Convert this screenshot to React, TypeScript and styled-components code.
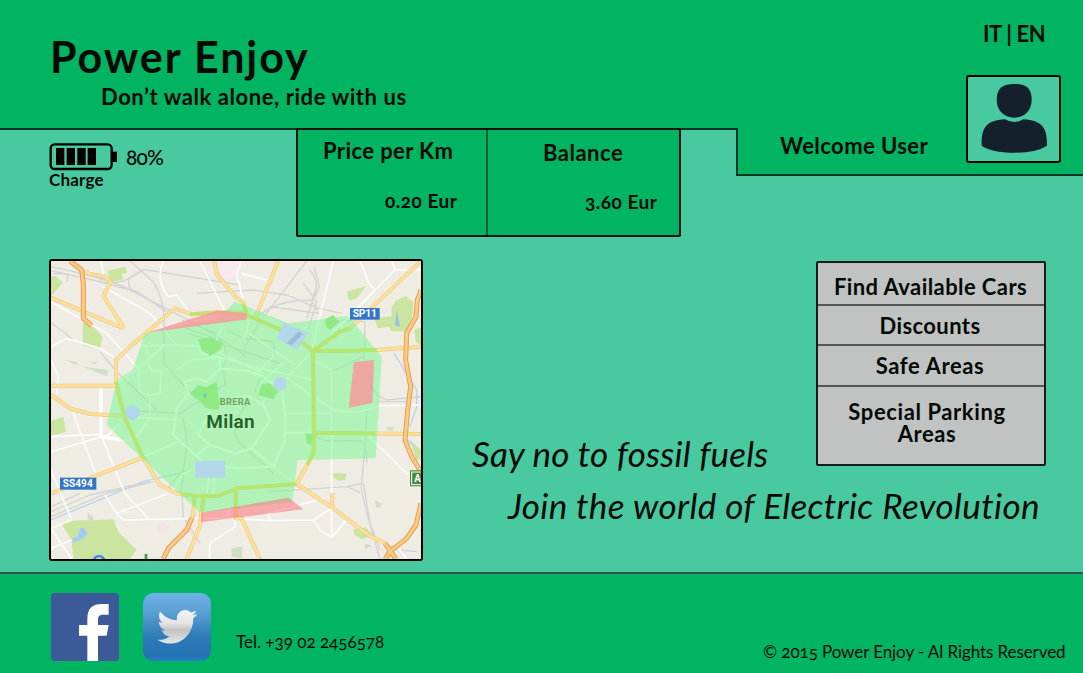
import React from "react";
import styled, { createGlobalStyle } from "styled-components";

const GlobalStyle = createGlobalStyle`
  * { box-sizing: border-box; }
  body { margin: 0; background: #48c9a0; }
`;

const Page = styled.div`
  width: 1083px;
  height: 673px;
  overflow: hidden;
  display: flex;
  flex-direction: column;
  background: #48c9a0;
  color: #030a06;
  font-family: Lato, "Open Sans", sans-serif;
  font-variant-numeric: oldstyle-nums;
  font-variant-ligatures: none;
`;

const Text = styled.span<{ $size: number; $line: number; $weight?: number; $track?: number }>`
  display: block;
  white-space: nowrap;
  font-size: ${(p) => p.$size}px;
  line-height: ${(p) => p.$line}px;
  font-weight: ${(p) => p.$weight ?? 700};
  letter-spacing: ${(p) => p.$track ?? 0}px;
`;

const Title = styled.h1`
  margin: 0;
  font-size: 43px;
  line-height: 46px;
  font-weight: 700;
  letter-spacing: 1.9px;
  white-space: nowrap;
`;

const Top = styled.header`
  display: flex;
  height: 259px;
  flex: none;
`;

const TopLeft = styled.div`
  width: 736px;
`;

const Brand = styled.div`
  height: 130px;
  padding: 34px 0 0 50px;
  background: #00b461;
  border-bottom: 2px solid #06361f;
`;

const Tagline = styled.div`
  padding: 1px 0 0 51px;
`;

const StatusRow = styled.div`
  display: flex;
`;

const Charge = styled.div`
  width: 296px;
  padding: 13px 0 0 49px;
`;

const ChargeLevel = styled.div`
  display: flex;
  align-items: center;
  gap: 9px;
  height: 27px;
`;

const Rates = styled.div`
  display: flex;
  width: 385px;
  height: 109px;
  margin-top: -2px;
  background: #00b461;
  border: 2px solid #02150c;
  border-radius: 2px;
`;

const Rate = styled.section<{ $divided?: boolean; $top: number }>`
  width: ${(p) => (p.$divided ? 190 : 191)}px;
  padding: ${(p) => p.$top}px 22px 0 0;
  border-right: ${(p) => (p.$divided ? "2px solid #045c35" : "0")};
  display: flex;
  flex-direction: column;
  gap: 22px;
`;

const RateName = styled.div<{ $left: number }>`
  padding-left: ${(p) => p.$left}px;
`;

const RateValue = styled.div<{ $left: number }>`
  padding-left: ${(p) => p.$left}px;
`;

const UserPanel = styled.div`
  position: relative;
  width: 347px;
  height: 176px;
  background: #00b461;
  border-bottom: 2px solid #06361f;
  &::before {
    content: "";
    position: absolute;
    left: 0;
    top: 128px;
    width: 2px;
    height: 46px;
    background: #06361f;
  }
`;

const Languages = styled.nav`
  display: flex;
  height: 75px;
  padding: 20px 0 0 247px;
`;

const UserRow = styled.div`
  display: flex;
  padding-left: 44px;
`;

const Welcome = styled.div`
  width: 186px;
  padding-top: 57px;
`;

const Avatar = styled.div`
  width: 95px;
  height: 88px;
  background: #48c9a0;
  border: 2px solid #010503;
  border-radius: 3px;
  svg { display: block; }
`;

const Main = styled.main`
  display: flex;
  height: 313px;
  flex: none;
  padding-left: 49px;
`;

const MapFrame = styled.div`
  width: 374px;
  height: 302px;
  border: 2px solid #000;
  border-radius: 3px;
  overflow: hidden;
  font-variant-numeric: normal;
  svg { display: block; }
`;

const Pitch = styled.div`
  width: 623px;
  padding: 2px 0 0 49px;
  font-style: italic;
`;

const PitchTop = styled.div`
  display: flex;
  justify-content: space-between;
  align-items: flex-start;
`;

const FirstLine = styled.div`
  padding-top: 169px;
`;

const SecondLine = styled.div`
  padding: 6px 0 0 36px;
`;

const Menu = styled.nav`
  width: 230px;
  height: 205px;
  background: #c1c3c2;
  border: 2px solid #161a18;
  border-radius: 2px;
  font-style: normal;
  text-align: center;
`;

const MenuItem = styled.a<{ $height: number; $top: number; $shift?: number; $last?: boolean }>`
  display: block;
  height: ${(p) => p.$height}px;
  padding-top: ${(p) => p.$top}px;
  padding-right: ${(p) => p.$shift ?? 0}px;
  border-bottom: ${(p) => (p.$last ? "0" : "2px solid #555756")};
`;

const Footer = styled.footer`
  display: flex;
  height: 101px;
  flex: none;
  padding-left: 51px;
  background: #00b461;
  border-top: 2px solid #36514a;
`;

const Social = styled.div`
  display: flex;
  gap: 24px;
  width: 185px;
  padding-top: 19px;
  svg { display: block; }
`;

const Phone = styled.div`
  width: 527px;
  padding-top: 57px;
`;

const Copyright = styled.div`
  padding-top: 67px;
`;

const Battery = () => (
  <svg width="68" height="28" viewBox="147 429 204 84">
    <rect x="152" y="433" width="183" height="74" rx="12" fill="none" stroke="#000" strokeWidth="7" />
    <path d="M336 455h15v31h-15z" />
    <path d="M168 444h25v51h-25zM200 444h25v51h-25zM232 444h25v51h-25zM263 444h25v51h-25z" />
  </svg>
);

const Person = () => (
  <svg width="91" height="84" viewBox="714 231 273 252" fill="#14202c">
    <path d="M853 252C888 252 905 264 905 300C905 334 880 353 852 353C825 353 800 334 800 300C800 264 818 252 853 252Z" />
    <path d="M755 437C754 382 768 362 825 358Q852 374 880 358C938 362 952 384 951 437Q920 458 853 458Q785 458 755 437Z" />
  </svg>
);

const Facebook = () => (
  <svg width="68" height="68" viewBox="153 84 204 204">
    <rect x="153" y="84" width="204" height="204" rx="11" fill="#3c5a98" />
    <path fill="#fff" d="M262 288V212H237V180H262V162C262 130 277 117 306 117H326V149H310C298 149 294 154 294 166V180H326L320 212H294V288Z" />
  </svg>
);

const Twitter = () => (
  <svg width="68" height="68" viewBox="429 84 204 204">
    <defs>
      <linearGradient id="sky" x1="0" y1="0" x2="0" y2="1">
        <stop offset="0" stopColor="#6db3e8" />
        <stop offset=".3" stopColor="#589fd4" />
        <stop offset=".65" stopColor="#2c7ab7" />
        <stop offset=".93" stopColor="#2473b4" />
        <stop offset="1" stopColor="#2a80cc" />
      </linearGradient>
      <linearGradient id="bird" x1="0" y1="0" x2="0" y2="1">
        <stop offset="0" stopColor="#f6f6f6" />
        <stop offset=".4" stopColor="#e4e4e4" />
        <stop offset=".6" stopColor="#c2c2c2" />
        <stop offset="1" stopColor="#e8e8e8" />
      </linearGradient>
    </defs>
    <rect x="429" y="84" width="204" height="204" rx="32" fill="url(#sky)" />
    <path
      fill="url(#bird)"
      transform="translate(472 123) scale(.234 .243)"
      d="M459.37 151.716c.325 4.548.325 9.097.325 13.645 0 138.72-105.583 298.558-298.558 298.558-59.452 0-114.68-17.219-161.137-47.106 8.447.974 16.568 1.299 25.34 1.299 49.055 0 94.213-16.568 130.274-44.832-46.132-.975-84.792-31.188-98.112-72.772 6.498.974 12.995 1.624 19.818 1.624 9.421 0 18.843-1.3 27.614-3.573-48.081-9.747-84.143-51.98-84.143-102.985v-1.299c13.969 7.797 30.214 12.67 47.431 13.319-28.264-18.843-46.781-51.005-46.781-87.391 0-19.492 5.197-37.36 14.294-52.954 51.655 63.675 129.3 105.258 216.365 109.807-1.624-7.797-2.599-15.918-2.599-24.04 0-57.828 46.782-104.934 104.934-104.934 30.213 0 57.502 12.67 76.67 33.137 23.715-4.548 46.456-13.32 66.599-25.34-7.798 24.366-24.366 44.833-46.132 57.827 21.117-2.273 41.584-8.122 60.426-16.243-14.292 20.791-32.161 39.308-52.628 54.253z"
    />
  </svg>
);

const parks = [
  "M203 62L255 50 262 68 245 72 250 88 210 98Z",
  "M33 78L50 80 68 98 33 140Z",
  "M128 215L165 235 187 262 180 298 128 285Z",
  "M920 125L978 108 950 145 928 152Z",
  "M1070 150L1100 137 1110 150 1120 155 1118 190 1105 245 1050 243 1048 230 1012 235 1005 205 1055 198 1055 172Z",
  "M1122 240L1143 232 1143 287 1128 275Z",
  "M33 513L70 500 78 545 33 557Z",
  "M62 820L100 812 220 808 235 845 290 900 270 927 100 927 95 870Z",
  "M878 670L918 670 916 690 895 692 880 682Z",
  "M940 838L978 832 998 855 965 868 943 855Z",
  "M1110 570L1143 600 1143 625 1128 630Z",
];

const palePatches = [
  "M78 330L110 335 115 345 95 340Z",
  "M148 335L175 335 165 343Z",
  "M130 350L205 360 200 378 165 365Z",
  "M142 790L158 798 160 815 145 812Z",
  "M575 895L608 890 605 925 575 920Z",
  "M1005 750L1025 762 1020 775 1007 770Z",
  "M975 880L995 887 975 898Z",
  "M1040 530L1062 532 1058 542 1040 540Z",
];

const rails = [
  "M33 50C150 75 230 95 290 130S460 205 620 320",
  "M33 62L170 93 290 125 380 185",
  "M40 70L85 72 80 95M170 93C240 110 270 85 310 58L600 105",
  "M270 33L340 95Q375 150 372 230V340L480 460",
  "M270 115Q255 85 290 70M270 115L350 165",
  "M33 218L70 245 100 270M180 305L230 365 350 480",
  "M470 130L640 120 740 135 835 175 905 190",
  "M800 33L660 215 610 300M810 60Q845 100 815 150L835 190",
  "M822 50L838 110 815 160 800 205M790 100L830 155 805 240",
  "M650 205Q700 150 815 150M688 170L835 190",
  "M425 210L530 250M440 235L540 270M560 240L610 265 700 275 704 310",
  "M900 210L975 215 972 330M975 330C990 400 990 430 1040 450L1143 440M1010 455L1110 455",
  "M445 250L720 340M540 270Q570 300 550 350L555 400M670 380Q645 400 645 430",
  "M250 480L420 490 560 400M630 450Q560 530 600 580L700 670",
  "M440 600Q430 650 425 720L430 800 480 880",
  "M425 500Q450 560 430 660L380 720",
  "M980 475L978 560 965 700Q955 710 1020 927M970 700L990 820 1020 900",
  "M825 548Q830 570 870 573L960 572Q980 580 980 640M685 725L920 710 965 700M920 710L960 727",
  "M33 785L150 735 330 695M33 800L200 730 340 695M33 770L120 730M985 860L1080 900 1130 905",
  "M875 365L970 320",
];

const streets = [
  "M370 33Q345 90 385 140L410 135 450 190M480 33L560 195 530 265 540 310",
  "M190 110L330 190 410 285M33 155L200 250 300 360M33 290L80 265 180 295 225 325",
  "M33 330L55 380 50 430M183 33L190 75M603 70L680 90M603 33L590 75 610 150",
  "M880 33L815 300M960 33L985 95 1005 122M1143 60L1065 60 870 255M1055 33L1065 60M1005 122L900 230",
  "M185 410L183 560M33 605L205 555 240 520M33 560L185 553M100 490L170 680M185 560L255 730 325 805",
  "M195 735L230 790 250 810 480 805 580 805M230 790L385 730M33 835L95 927M33 660L95 810 33 835M33 895L95 870",
  "M300 290L370 285 475 288 485 310 540 322M320 330L335 362 365 365 360 430 330 435 300 425 295 355 375 285",
  "M410 358L450 330 540 322 660 355 820 390M620 245L700 300 765 345",
  "M310 280L330 320M228 400L295 355M540 310L670 370M610 270L640 180",
  "M818 303L660 465M735 335L660 400M705 315L640 380M818 330L875 360V780",
  "M740 385L880 480 950 487 1020 468 1143 465M735 490H875",
  "M250 500L335 505 408 510M310 620L415 575M228 570L285 570 330 500 330 435",
  "M500 645L430 670 400 720M510 650L500 740M527 650L520 735M700 650L765 700",
  "M735 548H875M738 490V548M575 805L690 812 820 810 875 775M690 812L685 790 850 745",
  "M820 810L840 840 875 862 918 812M875 780V862M983 555L1105 675M585 805V830L510 880 508 927",
  "M1065 880L1100 927M560 805L570 770",
];

const innerRings = [
  "M540 355L620 362 670 380 725 420 735 490 735 570 700 650 595 655 500 645 400 555 410 475 445 432 435 395 470 385 500 395 540 355V320",
  "M510 485L475 555 510 585 585 610 635 595 690 510 670 465 630 440 590 440M510 585L470 615M635 595L700 650",
];

const avenues = [
  "M90 33L122 60 150 72 195 80 212 95 190 138 252 235",
  "M33 143L130 185 252 235",
  "M33 407L228 407 228 330 265 295 405 175 455 193 530 187 600 188 645 205 700 230 760 255 818 303",
  "M228 395L248 480 255 505 310 625 360 705 410 730 460 737 535 738 590 715 770 702",
  "M818 303L820 380 822 590 818 615 770 702 835 745 880 775 985 855 1035 880",
  "M818 303L925 302 1010 300 1143 290",
  "M818 303L900 245 930 235 1143 33",
  "M645 205L715 33",
  "M522 33L532 75 590 145 608 155 620 190",
  "M822 548L1143 552",
  "M33 730L165 678 225 655 310 622",
  "M33 435L90 475 150 492 248 497",
  "M490 740L480 825 440 927M464 740L458 805",
  "M587 715L587 805 605 805 660 927M877 730V775",
];

const greenBelt = [
  "M450 193L530 187 600 188 645 205 700 230 760 255 818 303 925 302 1010 300",
  "M228 395L248 480 255 505 310 625M425 733L460 737 535 738 590 715 770 702",
  "M818 303L820 380 822 590 818 615 800 645M818 303L900 245 930 235",
  "M822 548L1007 550M490 740L487 785M464 740L463 770M587 715V770M608 160L620 190",
];

const highways = [
  "M90 33L125 60 130 100 130 205 155 227",
  "M1143 120L1132 150 1128 200 1100 250 1097 330 1112 410 1103 480 1095 570 1115 620 1143 665",
  "M1143 760L1128 825 1100 865 1050 905 1035 927M1035 880L1068 927",
  "M456 803L440 840 385 895 370 927",
];

const MilanMap = () => (
  <svg width="370" height="298" viewBox="33 33 1110 894" fontFamily="Roboto, sans-serif" fontWeight="700">
    <rect x="33" y="33" width="1110" height="894" fill="#efece4" />
    <path d="M540 33H610L590 80 555 90 540 80Z" fill="#f8e8ef" />
    <path d="M350 825L370 815 388 828 380 850 350 845Z" fill="#f4e3e6" />
    <path d={parks.join("")} fill="#c9e5a0" />
    <path d={palePatches.join("")} fill="#cfe0c4" />
    <path d="M120 835L130 833 143 850 130 865 100 878 98 865 113 860Z" fill="#a2cbfa" />
    <path d="M1070 182L1080 230 1065 225Z" fill="#93bff5" />
    <path d="M1062 310L1130 420V470L1110 530M1105 570L1125 590M33 810L310 695 500 650" fill="none" stroke="#b5d3f3" strokeWidth="4" />
    <g fill="none" strokeLinejoin="round">
      <path d={rails.join("")} stroke="#d3d3d3" strokeWidth="4" />
      <path d={streets.join("")} stroke="#fcfcfa" strokeWidth="5" />
      <path d={innerRings.join("")} stroke="#fff" strokeWidth="7" />
      <path d="M183 410V560L240 570" stroke="#fff" strokeWidth="10" />
      <path d={avenues.join("")} stroke="#eccb7e" strokeWidth="12" />
      <path d={avenues.join("")} stroke="#fde09c" strokeWidth="8" />
      <path d={highways.join("")} stroke="#e5a04c" strokeWidth="15" />
      <path d={highways.join("")} stroke="#fcc987" strokeWidth="9" />
    </g>
    <path
      d="M315 250L535 205 585 155 745 220 925 198 1025 320 1017 465 1007 625 773 630 757 755 480 788 200 525 230 390 278 360Z"
      fill="rgba(120,248,144,.53)"
    />
    <path d={greenBelt.join("")} fill="none" stroke="#b5e666" strokeWidth="10" strokeLinejoin="round" opacity=".85" />
    <path
      d="M475 268L510 262 550 280 540 300 510 318 485 300ZM450 430L475 405 500 412 530 395 535 440 540 460 535 480 500 475 470 445ZM855 208L880 195 898 215 870 240 858 230ZM665 402L690 400 715 425 700 448 655 435ZM798 550L818 553 815 585 800 580Z"
      fill="#90ea84"
    />
    <path d="M490 435L500 430 495 448Z" fill="#5fc3c0" />
    <path d="M328 247L530 182 620 190V208ZM942 337L1002 330 997 458 927 473ZM483 788L745 743 790 778 483 817Z" fill="rgba(249,115,124,.55)" />
    <path d="M942 337L1002 330 997 458 927 473ZM328 247L530 182 620 190V208Z" fill="#f8a6a6" opacity=".65" />
    <g fill="#b2d6ea">
      <path d="M732 218L805 250 770 300 710 265ZM465 633H555V683H465Z" />
      <circle cx="720" cy="402" r="20" />
      <circle cx="277" cy="488" r="22" />
    </g>
    <path d="M740 280L775 245 788 252 755 285Z" fill="#9dbbd8" />
    <text x="539" y="465" fontSize="28" fontWeight="600" fill="#6f9c5f" textLength="92">BRERA</text>
    <text x="499" y="535" fontSize="57" fontWeight="600" fill="#25601f" textLength="145">Milan</text>
    <rect x="930" y="174" width="89" height="35" fill="#3474cb" />
    <text x="938" y="202" fontSize="31" fill="#fff" textLength="73">SP11</text>
    <rect x="60" y="683" width="109" height="36" fill="#3474cb" />
    <text x="68" y="712" fontSize="30" fill="#fff" textLength="90">SS494</text>
    <rect x="1110" y="661" width="55" height="48" rx="3" fill="#4a8b3c" />
    <rect x="1115" y="666" width="55" height="38" fill="none" stroke="#fff" strokeWidth="3" />
    <text x="1123" y="696" fontSize="30" fill="#fff">A</text>
    <text x="153" y="964" fontSize="68" fontWeight="500" fill="#4285f4">G<tspan x="309" fill="#34a853">l</tspan></text>
  </svg>
);

export default function App() {
  return (
    <Page>
      <GlobalStyle />
      <Top>
        <TopLeft>
          <Brand>
            <Title>Power Enjoy</Title>
            <Tagline><Text $size={22} $line={31} $track={0.57}>Don’t walk alone, ride with us</Text></Tagline>
          </Brand>
          <StatusRow>
            <Charge>
              <ChargeLevel>
                <Battery />
                <Text $size={21} $line={24} $weight={500} $track={-0.8}>80%</Text>
              </ChargeLevel>
              <Text $size={17} $line={20} $track={0.2}>Charge</Text>
            </Charge>
            <Rates>
              <Rate $divided $top={7}>
                <RateName $left={25}><Text $size={22} $line={28} $track={0.4}>Price per Km</Text></RateName>
                <RateValue $left={87}><Text $size={19} $line={28} $track={0.5}>0.20 Eur</Text></RateValue>
              </Rate>
              <Rate $top={9}>
                <RateName $left={55}><Text $size={22} $line={28} $track={0.5}>Balance</Text></RateName>
                <RateValue $left={97}><Text $size={19} $line={26} $track={0.5}>3.60 Eur</Text></RateValue>
              </Rate>
            </Rates>
          </StatusRow>
        </TopLeft>
        <UserPanel>
          <Languages><Text $size={22} $line={28} $track={-0.4}>IT | EN</Text></Languages>
          <UserRow>
            <Welcome><Text $size={22} $line={28} $track={0.42}>Welcome User</Text></Welcome>
            <Avatar><Person /></Avatar>
          </UserRow>
        </UserPanel>
      </Top>
      <Main>
        <MapFrame><MilanMap /></MapFrame>
        <Pitch>
          <PitchTop>
            <FirstLine><Text $size={35} $line={46} $weight={400} $track={0.2}>Say no to fossil fuels</Text></FirstLine>
            <Menu>
              <MenuItem $height={43} $top={10} $shift={1}><Text $size={22} $line={28} $track={0.42}>Find Available Cars</Text></MenuItem>
              <MenuItem $height={40} $top={6} $shift={2}><Text $size={22} $line={28} $track={0.4}>Discounts</Text></MenuItem>
              <MenuItem $height={41} $top={6} $shift={2}><Text $size={22} $line={28} $track={0.6}>Safe Areas</Text></MenuItem>
              <MenuItem $height={77} $top={14} $shift={8} $last>
                <Text $size={22} $line={22} $track={0.6}>Special Parking<br />Areas</Text>
              </MenuItem>
            </Menu>
          </PitchTop>
          <SecondLine><Text $size={35} $line={46} $weight={400} $track={0.38}>Join the world of Electric Revolution</Text></SecondLine>
        </Pitch>
      </Main>
      <Footer>
        <Social><Facebook /><Twitter /></Social>
        <Phone><Text $size={17} $line={22} $weight={400}>Tel. +39 02 2456578</Text></Phone>
        <Copyright><Text $size={17} $line={22} $weight={400} $track={-0.08}>© 2015 Power Enjoy - Al Rights Reserved</Text></Copyright>
      </Footer>
    </Page>
  );
}
